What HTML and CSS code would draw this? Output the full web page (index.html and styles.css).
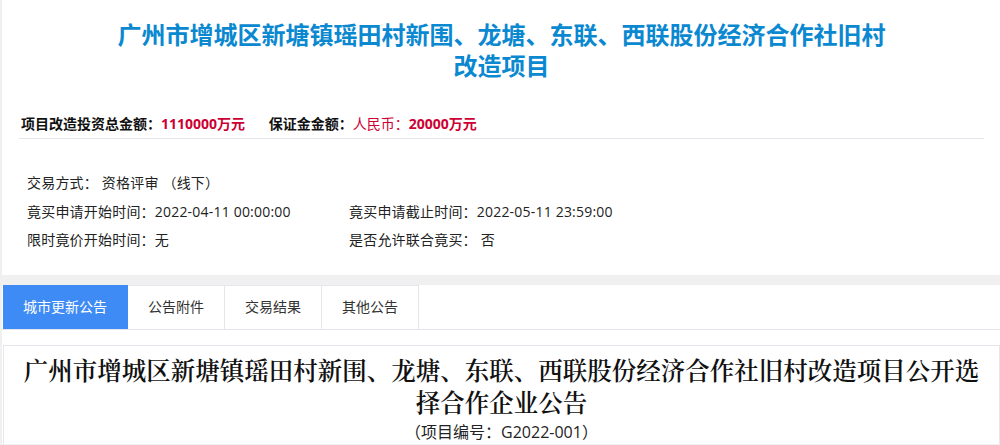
FILE: index.html
```html
<!DOCTYPE html>
<html lang="zh-CN">
<head>
    <meta charset="UTF-8">
    <meta name="viewport" content="width=device-width, initial-scale=1.0">
    <title>旧村改造项目</title>
    <link rel="stylesheet" href="styles.css">
</head>
<body>
    <div class="page">
        <div class="card">
            <h1 class="project-title">广州市增城区新塘镇瑶田村新围、龙塘、东联、西联股份经济合作社旧村改造项目</h1>

            <div class="amounts">
                <span class="amount-label">项目改造投资总金额：</span><span class="amount-value">1110000万元</span>
                <span class="amount-label gap">保证金金额：</span><span class="amount-unit">人民币：</span><span class="amount-value">20000万元</span>
            </div>

            <div class="info">
                <div class="info-row full">交易方式：&nbsp;资格评审 （线下）</div>
                <div class="info-row">竟买申请开始时间：2022-04-11 00:00:00</div>
                <div class="info-row">竟买申请截止时间：2022-05-11 23:59:00</div>
                <div class="info-row">限时竟价开始时间：无</div>
                <div class="info-row">是否允许联合竟买：&nbsp;否</div>
            </div>
        </div>

        <div class="tabs-panel">
            <ul class="tabs">
                <li class="tab active">城市更新公告</li>
                <li class="tab">公告附件</li>
                <li class="tab">交易结果</li>
                <li class="tab">其他公告</li>
            </ul>

            <div class="notice">
                <h2 class="notice-title">广州市增城区新塘镇瑶田村新围、龙塘、东联、西联股份经济合作社旧村改造项目公开选择合作企业公告</h2>
                <p class="notice-no">（项目编号：G2022-001）</p>
            </div>
        </div>
    </div>
</body>
</html>
```

FILE: styles.css
```css
:root {
    --title-blue: #0a88d0;
    --tab-blue: #3f8bf6;
    --red: #cc0033;
    --line: #e4e6ec;
}

* {
    box-sizing: border-box;
}

body {
    margin: 0;
    background: #f0f0f0;
    font-family: "Open Sans", "Noto Sans CJK SC", sans-serif;
    font-size: 14px;
    color: #333;
}

.page {
    padding-left: 2px;
}

.card {
    background: #fff;
    padding: 18px 16px 20px 17px;
}

.project-title {
    max-width: 790px;
    margin: 0 auto;
    font-family: "Noto Sans CJK SC", sans-serif;
    font-size: 24px;
    line-height: 31px;
    font-weight: bold;
    color: var(--title-blue);
    text-align: center;
}

.amounts {
    margin-top: 34px;
    padding-left: 2px;
    padding-bottom: 4px;
    line-height: 20px;
    font-weight: bold;
    color: #111;
    border-bottom: 1px solid var(--line);
}

.amount-value {
    color: var(--red);
}

.amount-unit {
    color: var(--red);
    font-weight: normal;
}

.gap {
    margin-left: 20px;
}

.info {
    display: grid;
    grid-template-columns: 322px 1fr;
    padding: 30px 0 0 8px;
    line-height: 28.5px;
    color: #222;
}

.info-row {
    letter-spacing: 0.2px;
}

.info-row.full {
    grid-column: 1 / -1;
}

.tabs-panel {
    margin-top: 10px;
    background: #fff;
}

.tabs {
    display: flex;
    margin: 0;
    padding: 0 0 0 1px;
    list-style: none;
    border-bottom: 1px solid var(--line);
}

.tab {
    height: 44px;
    line-height: 42px;
    padding: 0 20px;
    border: 1px solid var(--line);
    border-left: none;
    border-bottom: none;
    color: #333;
}

.tab.active {
    background: var(--tab-blue);
    border-color: var(--tab-blue);
    color: #fff;
}

.notice {
    margin-top: 15px;
    margin-left: 1px;
    padding: 8px 10px 0;
    border: 1px solid var(--line);
    border-bottom: none;
    text-align: center;
}

.notice-title {
    margin: 0;
    font-family: "Noto Serif CJK SC", "Liberation Serif", "Noto Sans CJK SC", serif;
    font-size: 24.5px;
    line-height: 32px;
    font-weight: 600;
    color: #111;
}

.notice-no {
    margin: 2px 0 0;
    font-size: 16px;
    line-height: 24px;
    color: #222;
}
```
